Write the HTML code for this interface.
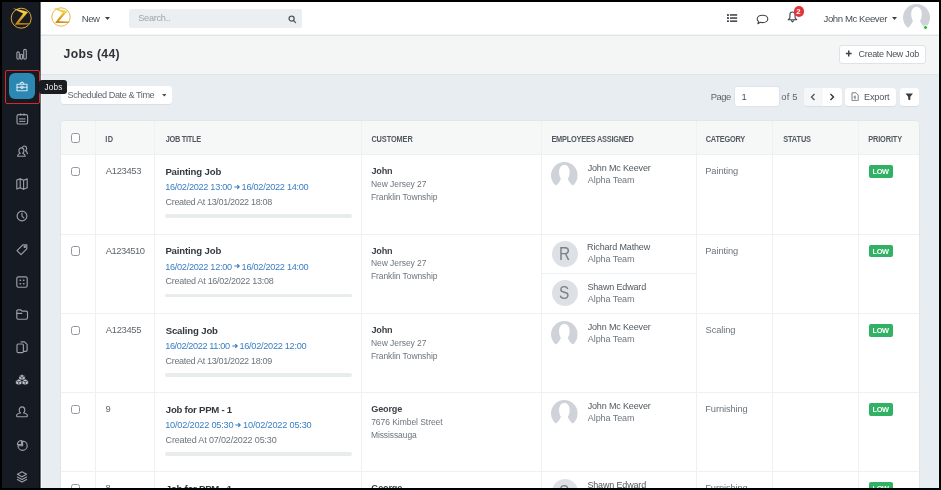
<!DOCTYPE html>
<html><head><meta charset="utf-8"><style>
*{box-sizing:border-box;margin:0;padding:0}
html,body{width:941px;height:490px;overflow:hidden;background:#000}
body{font-family:"Liberation Sans",sans-serif;position:relative}
.a{position:absolute;white-space:nowrap;line-height:1}
</style></head><body>
<div style="position:absolute;left:0;top:0;width:941px;height:490px;will-change:transform">
<div class="a" style="left:0px;top:0px;width:941px;height:490px;background:#000"></div>
<div class="a" style="left:2px;top:2px;width:937px;height:486px;background:#e8edf1"></div>
<div class="a" style="left:2px;top:2px;width:38px;height:486px;background:#161a23"></div>
<div class="a" style="left:39px;top:2px;width:1px;height:486px;background:#0c0f17"></div>
<div class="a" style="left:40px;top:2px;width:1px;height:486px;background:#6a6e74"></div>
<div class="a" style="left:41px;top:75px;width:1px;height:413px;background:#f4f8fb"></div>
<div class="a" style="left:41px;top:2px;width:898px;height:32px;background:#fff"></div>
<div class="a" style="left:41px;top:34px;width:898px;height:1px;background:#f1f2f3"></div>
<div class="a" style="left:41px;top:35px;width:898px;height:1px;background:#e2e5e7"></div>
<div class="a" style="left:41px;top:36px;width:898px;height:39px;background:#f4f6f6"></div>
<div class="a" style="left:41px;top:74px;width:898px;height:1px;background:#e1e5e8"></div>
<svg class="a" style="left:5.782608695652172px;top:2.8826086956521735px;" width="30.43" height="30.43" viewBox="0 0 30.43 30.43"><defs><linearGradient id="g21" x1="0" y1="0" x2="0.3" y2="1"><stop offset="0" stop-color="#f0c24a"/><stop offset=".45" stop-color="#f2cf3c"/><stop offset=".75" stop-color="#d99a18"/><stop offset="1" stop-color="#c27f0c"/></linearGradient></defs><g transform="scale(1.0869565217391306)"><circle cx="14" cy="14" r="9.2" fill="none" stroke="#e3ad36" stroke-width="0.9"/><path d="M6.3 4.9C10 5.6 15.5 6.8 20.3 8.2L11.8 18.3 23.2 18.7 20.5 19.8 8 20 15.8 9.6C12.5 8.2 9.5 6.5 6.3 4.9Z" fill="url(#g21)"/></g></svg>
<svg class="a" style="left:14.3px;top:46.5px;" width="14" height="14" viewBox="0 0 14 14"><g fill="none" stroke="#9a9fa7" stroke-width="1.15" stroke-linecap="round" stroke-linejoin="round"><rect x="2.9" y="4.9" width="2.4" height="7.2" rx="1.2"/><rect x="6.3" y="7.2" width="2.3" height="4.9" rx="1.1"/><rect x="9.7" y="2.4" width="2.6" height="9.7" rx="1.2"/></g></svg>
<div class="a" style="left:4.5px;top:69.5px;width:35px;height:34px;border:1.4px solid #d8282a;border-radius:2px"></div>
<div class="a" style="left:9px;top:73px;width:26px;height:26px;background:#2c87b3;border-radius:6px"></div>
<svg class="a" style="left:14.5px;top:79.0px;" width="14" height="14" viewBox="0 0 14 14"><g fill="none" stroke="#d3e6f0" stroke-width="1.1" stroke-linecap="round" stroke-linejoin="round"><path d="M2 5.2h10v6.6H2z" rx="1"/><path d="M2 8.2h10"/><path d="M5 5.2 6 3.4h2l1 1.8"/><circle cx="7" cy="8.2" r="1.2"/></g></svg>
<svg class="a" style="left:14.5px;top:112.0px;" width="14" height="14" viewBox="0 0 14 14"><g fill="none" stroke="#9a9fa7" stroke-width="1.15" stroke-linecap="round" stroke-linejoin="round"><rect x="2" y="2.6" width="10.6" height="9.4" rx="1.6"/><path d="M5.6 1.9v1.2M9 1.9v1.2"/><g stroke-width="1.3"><path d="M4.7 6.9h.9M6.8 6.9h.9M8.9 6.9h.9M4.7 9.3h.9M6.8 9.3h.9M8.9 9.3h.9"/></g></g></svg>
<svg class="a" style="left:14.5px;top:144.0px;" width="14" height="14" viewBox="0 0 14 14"><g fill="none" stroke="#9a9fa7" stroke-width="1.15" stroke-linecap="round" stroke-linejoin="round"><path d="M2.6 12.2c0-1.6 1.3-2.4 2.5-2.9-.8-.6-1.2-1.5-1.2-2.6 0-1.6 1.1-2.8 2.5-2.8s2.5 1.2 2.5 2.8c0 1.1-.4 2-1.2 2.6 1.2.5 2.5 1.3 2.5 2.9z"/><path d="M7.4 3.2c.4-.8 1.1-1.2 1.9-1.2 1.3 0 2.3 1 2.3 2.5 0 1-.4 1.8-1.1 2.3.9.5 1.7 1.3 1.9 2.8"/></g></svg>
<svg class="a" style="left:14.5px;top:177.0px;" width="14" height="14" viewBox="0 0 14 14"><g fill="none" stroke="#9a9fa7" stroke-width="1.15" stroke-linecap="round" stroke-linejoin="round"><path d="M1.8 3v9l3.4-1.2 3.4 1.4 3.6-1.4V1.9L8.6 3.3 5.2 1.9z"/><path d="M5.2 1.9v8.9M8.6 3.3v8.9"/></g></svg>
<svg class="a" style="left:14.5px;top:209.3px;" width="14" height="14" viewBox="0 0 14 14"><g fill="none" stroke="#9a9fa7" stroke-width="1.15" stroke-linecap="round" stroke-linejoin="round"><circle cx="7" cy="7" r="4.9"/><path d="M7 4.1v3l1.8 1.8"/></g></svg>
<svg class="a" style="left:14.5px;top:241.5px;" width="14" height="14" viewBox="0 0 14 14"><g fill="none" stroke="#9a9fa7" stroke-width="1.15" stroke-linecap="round" stroke-linejoin="round"><path d="M2 8.6 7.8 2.8h4v4L6 12.6z"/><circle cx="9.8" cy="4.8" r=".7" fill="#9a9fa7"/></g></svg>
<svg class="a" style="left:14.5px;top:275.0px;" width="14" height="14" viewBox="0 0 14 14"><g fill="none" stroke="#9a9fa7" stroke-width="1.15" stroke-linecap="round" stroke-linejoin="round"><rect x="1.8" y="1.8" width="10.4" height="10.4" rx="1.6"/><g stroke-width="1.5"><path d="M5.1 5.2h.4M8.5 5.2h.4M5.1 8.7h.4M8.5 8.7h.4"/></g></g></svg>
<svg class="a" style="left:14.5px;top:307.0px;" width="14" height="14" viewBox="0 0 14 14"><g fill="none" stroke="#9a9fa7" stroke-width="1.15" stroke-linecap="round" stroke-linejoin="round"><path d="M1.8 4.2c0-.8.5-1.4 1.3-1.4h2.7l1.2 1.3h4.2c.8 0 1.3.6 1.3 1.4v5.3c0 .8-.5 1.4-1.3 1.4H3.1c-.8 0-1.3-.6-1.3-1.4z"/><path d="M1.8 6.4h5"/></g></svg>
<svg class="a" style="left:14.5px;top:340.0px;" width="14" height="14" viewBox="0 0 14 14"><g fill="none" stroke="#9a9fa7" stroke-width="1.15" stroke-linecap="round" stroke-linejoin="round"><rect x="2" y="4" width="6.4" height="8.6" rx="1.2"/><path d="M6 1.8h3.5l2.6 2.6v5.8c0 .7-.5 1.2-1.2 1.2H8.4"/></g></svg>
<svg class="a" style="left:14.5px;top:373.5px;" width="14" height="12" viewBox="0 0 14 12"><g fill="#c3c7cf" stroke="#161a23" stroke-width=".6" stroke-linejoin="round"><path d="M7 .6l3.1 1.4v3.4L7 6.8 3.9 5.4V2z"/><path d="M3.8 5l3.1 1.4v3.4l-3.1 1.4L.7 9.8V6.4z"/><path d="M10.2 5l3.1 1.4v3.4l-3.1 1.4-3.1-1.4V6.4z"/></g><g fill="none" stroke="#161a23" stroke-width=".7"><path d="M3.9 2 7 3.4 10.1 2M7 3.4v3.4M.7 6.4l3.1 1.4 3.1-1.4M3.8 7.8v3.4M7.1 6.4l3.1 1.4 3.1-1.4M10.2 7.8v3.4"/></g></svg>
<svg class="a" style="left:14.5px;top:405.0px;" width="14" height="14" viewBox="0 0 14 14"><g fill="none" stroke="#9a9fa7" stroke-width="1.15" stroke-linecap="round" stroke-linejoin="round"><path d="M7 1.9c1.7 0 2.8 1.3 2.8 3.1 0 1.3-.6 2.4-1.3 3 2.3.4 3.9 1.5 3.9 2.7 0 .6-.4 1-1 1H2.6c-.6 0-1-.4-1-1 0-1.2 1.6-2.3 3.9-2.7-.7-.6-1.3-1.7-1.3-3 0-1.8 1.1-3.1 2.8-3.1z"/></g></svg>
<svg class="a" style="left:15.0px;top:438.0px;" width="14" height="14" viewBox="0 0 14 14"><g fill="none" stroke="#9a9fa7" stroke-width="1.15" stroke-linecap="round" stroke-linejoin="round"><path d="M7.6 3.1V7.7H3A4.6 4.6 0 1 0 7.6 3.1z"/><path d="M6.5 6.6H2.4A4.1 4.1 0 0 1 6.5 2.5z"/></g></svg>
<svg class="a" style="left:14.5px;top:469.8px;" width="14" height="14" viewBox="0 0 14 14"><g fill="none" stroke="#9a9fa7" stroke-width="1.15" stroke-linecap="round" stroke-linejoin="round"><path d="M7 1.8l4.6 2.5L7 6.8 2.4 4.3z"/><path d="M2.4 7l4.6 2.5L11.6 7"/><path d="M2.4 9.6 7 12.1l4.6-2.5"/></g></svg>
<svg class="a" style="left:47.1px;top:3.3999999999999986px;" width="28.0" height="28.0" viewBox="0 0 28.0 28.0"><defs><linearGradient id="g61" x1="0" y1="0" x2="0.3" y2="1"><stop offset="0" stop-color="#f0c24a"/><stop offset=".45" stop-color="#f2cf3c"/><stop offset=".75" stop-color="#d99a18"/><stop offset="1" stop-color="#c27f0c"/></linearGradient></defs><g transform="scale(1.0)"><circle cx="14" cy="14" r="9.2" fill="none" stroke="#e3ad36" stroke-width="0.9"/><path d="M6.3 4.9C10 5.6 15.5 6.8 20.3 8.2L11.8 18.3 23.2 18.7 20.5 19.8 8 20 15.8 9.6C12.5 8.2 9.5 6.5 6.3 4.9Z" fill="url(#g61)"/></g></svg>
<div class="a" style="left:81.73px;top:13.67px;font-size:9.6px;color:#4a5057;letter-spacing:-0.490px;">New</div>
<svg class="a" style="left:104.5px;top:16.5px;" width="5" height="3" viewBox="0 0 5 3"><path d="M0 0h5L2.5 3z" fill="#3b4047"/></svg>
<div class="a" style="left:129px;top:9px;width:173px;height:19px;background:#eceff1;border-radius:2px"></div>
<div class="a" style="left:138.29px;top:14.11px;font-size:9.2px;color:#9ea5ac;letter-spacing:-0.290px;">Search..</div>
<svg class="a" style="left:287.5px;top:14.5px;" width="9" height="9" viewBox="0 0 9 9"><g fill="none" stroke="#50565c" stroke-width="1.3"><circle cx="3.6" cy="3.6" r="2.55"/><path d="M5.6 5.6 7.6 7.6" stroke-linecap="round"/></g></svg>
<svg class="a" style="left:727px;top:13.8px;" width="11" height="8.5" viewBox="0 0 11 8.5"><g fill="#3a3f45"><rect x="0" y="0" width="1.9" height="1.9" rx=".4"/><rect x="0" y="3.1" width="1.9" height="1.9" rx=".4"/><rect x="0" y="6.2" width="1.9" height="1.9" rx=".4"/><rect x="3" y=".2" width="7.2" height="1.5"/><rect x="3" y="3.3" width="7.2" height="1.5"/><rect x="3" y="6.4" width="7.2" height="1.5"/></g></svg>
<svg class="a" style="left:755.5px;top:13.5px;" width="13" height="11" viewBox="0 0 13 11"><path d="M6.5 1.2c3 0 5.3 1.6 5.3 3.7s-2.3 3.7-5.3 3.7c-.7 0-1.4-.1-2-.3L1.8 9.7l.9-2.1C1.7 6.9 1.2 6 1.2 4.9c0-2.1 2.3-3.7 5.3-3.7z" fill="none" stroke="#3f444a" stroke-width="1.1" stroke-linejoin="round"/></svg>
<svg class="a" style="left:786.5px;top:11px;" width="11" height="12.5" viewBox="0 0 11 12.5"><g fill="none" stroke="#3f444a" stroke-width="1.1" stroke-linejoin="round"><path d="M5.5 1C3.9 1 2.9 2.3 2.9 3.9v3L1.2 8.8h8.6L8.1 6.9v-3C8.1 2.3 7.1 1 5.5 1z"/><path d="M4 9.4l1.5 1.5L7 9.4"/></g></svg>
<div class="a" style="left:793.5px;top:6.2px;width:10.6px;height:10.6px;background:#e3343a;border-radius:50%"></div>
<div class="a" style="left:796.13px;top:7.70px;font-size:7.8px;font-weight:700;color:#fff;letter-spacing:0.000px;">2</div>
<div class="a" style="left:823.56px;top:13.97px;font-size:9.6px;color:#4a5057;letter-spacing:-0.425px;">John Mc Keever</div>
<svg class="a" style="left:891.8px;top:17px;" width="5" height="3" viewBox="0 0 5 3"><path d="M0 0h5L2.5 3z" fill="#3b4047"/></svg>
<svg class="a" style="left:902.5px;top:4px;" width="27" height="27" viewBox="0 0 27 27"><defs><clipPath id="c9024"><rect x="0" y="0" width="27" height="23.76"/></clipPath></defs><circle cx="13.5" cy="13.5" r="13.5" fill="#cfd3d9" clip-path="url(#c9024)"/><path transform="scale(1.0384615384615385)" d="M4.5 23.5C7 21 9 18.5 9.6 16.2 8.2 14.2 7.6 11.2 8 8 8.5 4.6 10.5 2.6 13 2.6s4.5 2 5 5.4c.4 3.2-.2 6.2-1.6 8.2.6 2.3 2.6 4.8 5.1 7.3V27H4.5z" fill="#fff"/></svg>
<div class="a" style="left:922.6px;top:24.6px;width:5.4px;height:5.4px;background:#2dbb3c;border-radius:50%;border:1px solid #fff"></div>
<div class="a" style="left:63.62px;top:48.07px;font-size:12.2px;font-weight:700;color:#2d3338;letter-spacing:0.304px;">Jobs (44)</div>
<div class="a" style="left:839px;top:44.5px;width:86.5px;height:19px;background:#fff;border:1px solid #dfe3e7;border-radius:3px"></div>
<svg class="a" style="left:844.9px;top:49.8px;" width="7.5" height="7" viewBox="0 0 7.5 7"><path d="M3.75 .6v5.8M.85 3.5h5.8" stroke="#3b4249" stroke-width="1.5"/></svg>
<div class="a" style="left:858.55px;top:49.78px;font-size:9.0px;color:#4a525a;letter-spacing:-0.302px;">Create New Job</div>
<div class="a" style="left:61px;top:86px;width:111px;height:18px;background:#fff;border-radius:3px;box-shadow:0 .5px 1px rgba(0,0,0,.06)"></div>
<div class="a" style="left:67.59px;top:90.80px;font-size:9.1px;color:#5d6873;letter-spacing:-0.426px;">Scheduled Date &amp; Time</div>
<svg class="a" style="left:161.8px;top:94.1px;" width="4.6" height="2.6" viewBox="0 0 4.6 2.6"><path d="M0 0h4.6L2.3 2.6z" fill="#4a525a"/></svg>
<div class="a" style="left:710.85px;top:91.94px;font-size:9.4px;color:#5c656c;letter-spacing:-0.474px;">Page</div>
<div class="a" style="left:733.8px;top:85.6px;width:45.8px;height:21.6px;background:#fff;border:1px solid #dfe3e7;border-radius:3px"></div>
<div class="a" style="left:741.50px;top:91.94px;font-size:9.4px;color:#4a525a;letter-spacing:0.000px;">1</div>
<div class="a" style="left:781.32px;top:91.94px;font-size:9.4px;color:#5c656c;letter-spacing:0.200px;">of 5</div>
<div class="a" style="left:803.7px;top:87.7px;width:38px;height:18.3px;background:#fff;border-radius:3px;box-shadow:0 .5px 1px rgba(0,0,0,.07)"></div>
<div class="a" style="left:803.7px;top:87.7px;width:19px;height:18.3px;background:#f5f7f8;border-radius:3px 0 0 3px"></div>
<svg class="a" style="left:810px;top:93px;" width="6" height="8" viewBox="0 0 6 8"><path d="M4.5 1 1.5 4l3 3" fill="none" stroke="#555c63" stroke-width="1.4"/></svg>
<svg class="a" style="left:829px;top:93px;" width="6" height="8" viewBox="0 0 6 8"><path d="M1.5 1l3 3-3 3" fill="none" stroke="#2f353b" stroke-width="1.4"/></svg>
<div class="a" style="left:845.4px;top:87.7px;width:50.6px;height:18.3px;background:#fff;border-radius:3px;box-shadow:0 .5px 1px rgba(0,0,0,.07)"></div>
<svg class="a" style="left:851px;top:91.5px;" width="8" height="9.5" viewBox="0 0 8 9.5"><g fill="none" stroke="#6a727a" stroke-width=".9"><path d="M1 .8h4l2.2 2.2v5.7H1z"/><path d="M3 4.5l1.2 1.3M4.2 4.5 3 5.8M4 3.5v4"/></g></svg>
<div class="a" style="left:863.96px;top:92.71px;font-size:9.2px;color:#4f5760;letter-spacing:-0.192px;">Export</div>
<div class="a" style="left:899.8px;top:87.7px;width:19px;height:18.3px;background:#fff;border-radius:3px;box-shadow:0 .5px 1px rgba(0,0,0,.07)"></div>
<svg class="a" style="left:905px;top:93px;" width="8.5" height="8" viewBox="0 0 8.5 8"><path d="M.5.5h7.5L5.3 3.8v3.4L3.2 6.4V3.8z" fill="#363c42"/></svg>
<div class="a" style="left:60px;top:120px;width:860px;height:400px;background:#fff;border:1px solid #e2e6e9;border-radius:5px 5px 0 0"></div>
<div class="a" style="left:61px;top:121px;width:858px;height:33px;background:#f6f8f8;border-radius:4px 4px 0 0"></div>
<div class="a" style="left:95px;top:121px;width:1px;height:400px;background:#edf1f2"></div>
<div class="a" style="left:154px;top:121px;width:1px;height:400px;background:#edf1f2"></div>
<div class="a" style="left:361px;top:121px;width:1px;height:400px;background:#edf1f2"></div>
<div class="a" style="left:541px;top:121px;width:1px;height:400px;background:#edf1f2"></div>
<div class="a" style="left:696px;top:121px;width:1px;height:400px;background:#edf1f2"></div>
<div class="a" style="left:772px;top:121px;width:1px;height:400px;background:#edf1f2"></div>
<div class="a" style="left:858px;top:121px;width:1px;height:400px;background:#edf1f2"></div>
<div class="a" style="left:61px;top:154px;width:858px;height:1px;background:#edf1f2"></div>
<div class="a" style="left:61px;top:234px;width:858px;height:1px;background:#edf1f2"></div>
<div class="a" style="left:61px;top:313px;width:858px;height:1px;background:#edf1f2"></div>
<div class="a" style="left:61px;top:392px;width:858px;height:1px;background:#edf1f2"></div>
<div class="a" style="left:61px;top:471px;width:858px;height:1px;background:#edf1f2"></div>
<div class="a" style="left:541px;top:273px;width:155px;height:1px;background:#edf1f2"></div>
<div class="a" style="left:70.6px;top:133.3px;width:9.7px;height:9.6px;border:1.1px solid #92969b;border-radius:2.5px;background:#fff"></div>
<div class="a" style="left:105.22px;top:135.94px;font-size:7.4px;font-weight:700;color:#535b62;letter-spacing:0.477px;transform:scaleY(1.1);transform-origin:0 6.26px">ID</div>
<div class="a" style="left:165.79px;top:135.94px;font-size:7.4px;font-weight:700;color:#535b62;letter-spacing:-0.306px;transform:scaleY(1.1);transform-origin:0 6.26px">JOB TITLE</div>
<div class="a" style="left:371.40px;top:135.94px;font-size:7.4px;font-weight:700;color:#535b62;letter-spacing:-0.119px;transform:scaleY(1.1);transform-origin:0 6.26px">CUSTOMER</div>
<div class="a" style="left:551.42px;top:136.04px;font-size:7.4px;font-weight:700;color:#535b62;letter-spacing:-0.229px;transform:scaleY(1.1);transform-origin:0 6.26px">EMPLOYEES ASSIGNED</div>
<div class="a" style="left:705.70px;top:135.94px;font-size:7.4px;font-weight:700;color:#535b62;letter-spacing:-0.214px;transform:scaleY(1.1);transform-origin:0 6.26px">CATEGORY</div>
<div class="a" style="left:783.18px;top:135.94px;font-size:7.4px;font-weight:700;color:#535b62;letter-spacing:-0.122px;transform:scaleY(1.1);transform-origin:0 6.26px">STATUS</div>
<div class="a" style="left:868.22px;top:135.94px;font-size:7.4px;font-weight:700;color:#535b62;letter-spacing:-0.148px;transform:scaleY(1.1);transform-origin:0 6.26px">PRIORITY</div>
<div class="a" style="left:70.6px;top:166.9px;width:9.7px;height:9.6px;border:1.1px solid #92969b;border-radius:2.5px;background:#fff"></div>
<div class="a" style="left:105.80px;top:166.14px;font-size:9.4px;color:#5f676e;letter-spacing:-0.312px;">A123453</div>
<div class="a" style="left:165.38px;top:166.67px;font-size:9.6px;font-weight:700;color:#33393f;letter-spacing:-0.154px;">Painting Job</div>
<div class="a" style="left:165.21px;top:183.01px;font-size:9.2px;color:#3a7ec3;letter-spacing:-0.307px;">16/02/2022 13:00</div>
<svg class="a" style="left:233.8px;top:183.5px;" width="6.2" height="6" viewBox="0 0 6.2 6"><path d="M.3 3h5M3.3 1.1 5.2 3 3.3 4.9" fill="none" stroke="#3a7ec3" stroke-width="1.15"/></svg>
<div class="a" style="left:241.61px;top:183.01px;font-size:9.2px;color:#3a7ec3;letter-spacing:-0.294px;">16/02/2022 14:00</div>
<div class="a" style="left:165.55px;top:197.98px;font-size:9.0px;color:#6c747b;letter-spacing:-0.325px;">Created At 13/01/2022 18:08</div>
<div class="a" style="left:165.3px;top:214.3px;width:186.5px;height:3.6px;background:#e8eced;border-radius:2px"></div>
<div class="a" style="left:371.46px;top:167.00px;font-size:9.1px;font-weight:700;color:#3d4349;letter-spacing:-0.189px;">John</div>
<div class="a" style="left:370.92px;top:179.90px;font-size:8.5px;color:#6d757c;letter-spacing:-0.052px;">New Jersey 27</div>
<div class="a" style="left:370.92px;top:192.50px;font-size:8.5px;color:#6d757c;letter-spacing:-0.085px;">Franklin Township</div>
<svg class="a" style="left:551.4px;top:161.5px;" width="26.7" height="26.7" viewBox="0 0 26.7 26.7"><defs><clipPath id="c551161"><rect x="0" y="0" width="26.7" height="23.496"/></clipPath></defs><circle cx="13.35" cy="13.35" r="13.35" fill="#cfd3d9" clip-path="url(#c551161)"/><path transform="scale(1.0269230769230768)" d="M4.5 23.5C7 21 9 18.5 9.6 16.2 8.2 14.2 7.6 11.2 8 8 8.5 4.6 10.5 2.6 13 2.6s4.5 2 5 5.4c.4 3.2-.2 6.2-1.6 8.2.6 2.3 2.6 4.8 5.1 7.3V27H4.5z" fill="#fff"/></svg>
<div class="a" style="left:587.66px;top:163.98px;font-size:9.0px;color:#50585f;letter-spacing:-0.146px;">John Mc Keever</div>
<div class="a" style="left:587.80px;top:175.88px;font-size:9.0px;color:#6f777e;letter-spacing:-0.067px;">Alpha Team</div>
<div class="a" style="left:705.26px;top:167.03px;font-size:9.3px;color:#6c747b;letter-spacing:-0.103px;">Painting</div>
<div class="a" style="left:868.7px;top:165.1px;width:24px;height:12.6px;background:#30b163;border-radius:2px"></div>
<div class="a" style="left:872.52px;top:168.44px;font-size:7.4px;font-weight:700;color:#fff;letter-spacing:-0.399px;">LOW</div>
<div class="a" style="left:70.6px;top:246.4px;width:9.7px;height:9.6px;border:1.1px solid #92969b;border-radius:2.5px;background:#fff"></div>
<div class="a" style="left:105.80px;top:245.64px;font-size:9.4px;color:#5f676e;letter-spacing:-0.519px;">A1234510</div>
<div class="a" style="left:165.38px;top:246.17px;font-size:9.6px;font-weight:700;color:#33393f;letter-spacing:-0.154px;">Painting Job</div>
<div class="a" style="left:165.21px;top:262.51px;font-size:9.2px;color:#3a7ec3;letter-spacing:-0.307px;">16/02/2022 12:00</div>
<svg class="a" style="left:233.8px;top:263.0px;" width="6.2" height="6" viewBox="0 0 6.2 6"><path d="M.3 3h5M3.3 1.1 5.2 3 3.3 4.9" fill="none" stroke="#3a7ec3" stroke-width="1.15"/></svg>
<div class="a" style="left:241.61px;top:262.51px;font-size:9.2px;color:#3a7ec3;letter-spacing:-0.294px;">16/02/2022 14:00</div>
<div class="a" style="left:165.55px;top:277.48px;font-size:9.0px;color:#6c747b;letter-spacing:-0.267px;">Created At 16/02/2022 13:08</div>
<div class="a" style="left:165.3px;top:293.8px;width:186.5px;height:3.6px;background:#e8eced;border-radius:2px"></div>
<div class="a" style="left:371.46px;top:246.50px;font-size:9.1px;font-weight:700;color:#3d4349;letter-spacing:-0.189px;">John</div>
<div class="a" style="left:370.92px;top:259.40px;font-size:8.5px;color:#6d757c;letter-spacing:-0.052px;">New Jersey 27</div>
<div class="a" style="left:370.92px;top:272.00px;font-size:8.5px;color:#6d757c;letter-spacing:-0.085px;">Franklin Township</div>
<div class="a" style="left:551.8px;top:241.0px;width:26px;height:26px;background:#dde1e6;border-radius:50%"></div>
<div class="a" style="left:558.93px;top:245.02px;font-size:18.4px;color:#7b8187;letter-spacing:0.000px;transform:scaleX(.84);transform-origin:0 0">R</div>
<div class="a" style="left:587.08px;top:243.48px;font-size:9.0px;color:#50585f;letter-spacing:-0.145px;">Richard Mathew</div>
<div class="a" style="left:587.80px;top:255.38px;font-size:9.0px;color:#6f777e;letter-spacing:-0.067px;">Alpha Team</div>
<div class="a" style="left:551.8px;top:280.3px;width:26px;height:26px;background:#dde1e6;border-radius:50%"></div>
<div class="a" style="left:559.37px;top:284.32px;font-size:18.4px;color:#7b8187;letter-spacing:0.000px;transform:scaleX(.84);transform-origin:0 0">S</div>
<div class="a" style="left:587.39px;top:282.78px;font-size:9.0px;color:#50585f;letter-spacing:-0.159px;">Shawn Edward</div>
<div class="a" style="left:587.80px;top:294.68px;font-size:9.0px;color:#6f777e;letter-spacing:-0.067px;">Alpha Team</div>
<div class="a" style="left:705.26px;top:246.53px;font-size:9.3px;color:#6c747b;letter-spacing:-0.103px;">Painting</div>
<div class="a" style="left:868.7px;top:244.6px;width:24px;height:12.6px;background:#30b163;border-radius:2px"></div>
<div class="a" style="left:872.52px;top:247.94px;font-size:7.4px;font-weight:700;color:#fff;letter-spacing:-0.399px;">LOW</div>
<div class="a" style="left:70.6px;top:325.9px;width:9.7px;height:9.6px;border:1.1px solid #92969b;border-radius:2.5px;background:#fff"></div>
<div class="a" style="left:105.80px;top:325.14px;font-size:9.4px;color:#5f676e;letter-spacing:-0.312px;">A123455</div>
<div class="a" style="left:165.71px;top:325.67px;font-size:9.6px;font-weight:700;color:#33393f;letter-spacing:-0.159px;">Scaling Job</div>
<div class="a" style="left:165.21px;top:342.01px;font-size:9.2px;color:#3a7ec3;letter-spacing:-0.404px;">16/02/2022 11:00</div>
<svg class="a" style="left:231.65504885993485px;top:342.5px;" width="6.2" height="6" viewBox="0 0 6.2 6"><path d="M.3 3h5M3.3 1.1 5.2 3 3.3 4.9" fill="none" stroke="#3a7ec3" stroke-width="1.15"/></svg>
<div class="a" style="left:239.47px;top:342.01px;font-size:9.2px;color:#3a7ec3;letter-spacing:-0.294px;">16/02/2022 12:00</div>
<div class="a" style="left:165.55px;top:356.98px;font-size:9.0px;color:#6c747b;letter-spacing:-0.325px;">Created At 13/01/2022 18:09</div>
<div class="a" style="left:165.3px;top:373.3px;width:186.5px;height:3.6px;background:#e8eced;border-radius:2px"></div>
<div class="a" style="left:371.46px;top:326.00px;font-size:9.1px;font-weight:700;color:#3d4349;letter-spacing:-0.189px;">John</div>
<div class="a" style="left:370.92px;top:338.90px;font-size:8.5px;color:#6d757c;letter-spacing:-0.052px;">New Jersey 27</div>
<div class="a" style="left:370.92px;top:351.50px;font-size:8.5px;color:#6d757c;letter-spacing:-0.085px;">Franklin Township</div>
<svg class="a" style="left:551.4px;top:320.5px;" width="26.7" height="26.7" viewBox="0 0 26.7 26.7"><defs><clipPath id="c551320"><rect x="0" y="0" width="26.7" height="23.496"/></clipPath></defs><circle cx="13.35" cy="13.35" r="13.35" fill="#cfd3d9" clip-path="url(#c551320)"/><path transform="scale(1.0269230769230768)" d="M4.5 23.5C7 21 9 18.5 9.6 16.2 8.2 14.2 7.6 11.2 8 8 8.5 4.6 10.5 2.6 13 2.6s4.5 2 5 5.4c.4 3.2-.2 6.2-1.6 8.2.6 2.3 2.6 4.8 5.1 7.3V27H4.5z" fill="#fff"/></svg>
<div class="a" style="left:587.66px;top:322.98px;font-size:9.0px;color:#50585f;letter-spacing:-0.146px;">John Mc Keever</div>
<div class="a" style="left:587.80px;top:334.88px;font-size:9.0px;color:#6f777e;letter-spacing:-0.067px;">Alpha Team</div>
<div class="a" style="left:705.58px;top:326.03px;font-size:9.3px;color:#6c747b;letter-spacing:-0.109px;">Scaling</div>
<div class="a" style="left:868.7px;top:324.1px;width:24px;height:12.6px;background:#30b163;border-radius:2px"></div>
<div class="a" style="left:872.52px;top:327.44px;font-size:7.4px;font-weight:700;color:#fff;letter-spacing:-0.399px;">LOW</div>
<div class="a" style="left:70.6px;top:404.9px;width:9.7px;height:9.6px;border:1.1px solid #92969b;border-radius:2.5px;background:#fff"></div>
<div class="a" style="left:105.38px;top:404.14px;font-size:9.4px;color:#5f676e;letter-spacing:0.000px;">9</div>
<div class="a" style="left:165.86px;top:404.67px;font-size:9.6px;font-weight:700;color:#33393f;letter-spacing:-0.255px;">Job for PPM - 1</div>
<div class="a" style="left:165.21px;top:421.01px;font-size:9.2px;color:#3a7ec3;letter-spacing:-0.207px;">10/02/2022 05:30</div>
<svg class="a" style="left:235.3px;top:421.5px;" width="6.2" height="6" viewBox="0 0 6.2 6"><path d="M.3 3h5M3.3 1.1 5.2 3 3.3 4.9" fill="none" stroke="#3a7ec3" stroke-width="1.15"/></svg>
<div class="a" style="left:243.11px;top:421.01px;font-size:9.2px;color:#3a7ec3;letter-spacing:-0.194px;">10/02/2022 05:30</div>
<div class="a" style="left:165.55px;top:435.98px;font-size:9.0px;color:#6c747b;letter-spacing:-0.152px;">Created At 07/02/2022 05:30</div>
<div class="a" style="left:165.3px;top:452.3px;width:186.5px;height:3.6px;background:#e8eced;border-radius:2px"></div>
<div class="a" style="left:371.24px;top:405.00px;font-size:9.1px;font-weight:700;color:#3d4349;letter-spacing:-0.168px;">George</div>
<div class="a" style="left:371.18px;top:417.90px;font-size:8.5px;color:#6d757c;letter-spacing:-0.048px;">7676 Kimbel Street</div>
<div class="a" style="left:370.92px;top:430.50px;font-size:8.5px;color:#6d757c;letter-spacing:-0.093px;">Mississauga</div>
<svg class="a" style="left:551.4px;top:399.5px;" width="26.7" height="26.7" viewBox="0 0 26.7 26.7"><defs><clipPath id="c551399"><rect x="0" y="0" width="26.7" height="23.496"/></clipPath></defs><circle cx="13.35" cy="13.35" r="13.35" fill="#cfd3d9" clip-path="url(#c551399)"/><path transform="scale(1.0269230769230768)" d="M4.5 23.5C7 21 9 18.5 9.6 16.2 8.2 14.2 7.6 11.2 8 8 8.5 4.6 10.5 2.6 13 2.6s4.5 2 5 5.4c.4 3.2-.2 6.2-1.6 8.2.6 2.3 2.6 4.8 5.1 7.3V27H4.5z" fill="#fff"/></svg>
<div class="a" style="left:587.66px;top:401.98px;font-size:9.0px;color:#50585f;letter-spacing:-0.146px;">John Mc Keever</div>
<div class="a" style="left:587.80px;top:413.88px;font-size:9.0px;color:#6f777e;letter-spacing:-0.067px;">Alpha Team</div>
<div class="a" style="left:705.26px;top:405.03px;font-size:9.3px;color:#6c747b;letter-spacing:-0.104px;">Furnishing</div>
<div class="a" style="left:868.7px;top:403.1px;width:24px;height:12.6px;background:#30b163;border-radius:2px"></div>
<div class="a" style="left:872.52px;top:406.44px;font-size:7.4px;font-weight:700;color:#fff;letter-spacing:-0.399px;">LOW</div>
<div class="a" style="left:70.6px;top:483.9px;width:9.7px;height:9.6px;border:1.1px solid #92969b;border-radius:2.5px;background:#fff"></div>
<div class="a" style="left:105.42px;top:483.14px;font-size:9.4px;color:#5f676e;letter-spacing:0.000px;">8</div>
<div class="a" style="left:165.86px;top:483.67px;font-size:9.6px;font-weight:700;color:#33393f;letter-spacing:-0.255px;">Job for PPM - 1</div>
<div class="a" style="left:165.21px;top:500.01px;font-size:9.2px;color:#3a7ec3;letter-spacing:-0.207px;">10/02/2022 05:30</div>
<svg class="a" style="left:235.3px;top:500.5px;" width="6.2" height="6" viewBox="0 0 6.2 6"><path d="M.3 3h5M3.3 1.1 5.2 3 3.3 4.9" fill="none" stroke="#3a7ec3" stroke-width="1.15"/></svg>
<div class="a" style="left:243.11px;top:500.01px;font-size:9.2px;color:#3a7ec3;letter-spacing:-0.194px;">10/02/2022 05:30</div>
<div class="a" style="left:165.55px;top:514.98px;font-size:9.0px;color:#6c747b;letter-spacing:-0.152px;">Created At 07/02/2022 05:30</div>
<div class="a" style="left:165.3px;top:531.3px;width:186.5px;height:3.6px;background:#e8eced;border-radius:2px"></div>
<div class="a" style="left:371.24px;top:484.00px;font-size:9.1px;font-weight:700;color:#3d4349;letter-spacing:-0.168px;">George</div>
<div class="a" style="left:371.18px;top:496.90px;font-size:8.5px;color:#6d757c;letter-spacing:-0.048px;">7676 Kimbel Street</div>
<div class="a" style="left:370.92px;top:509.50px;font-size:8.5px;color:#6d757c;letter-spacing:-0.093px;">Mississauga</div>
<div class="a" style="left:551.8px;top:478.5px;width:26px;height:26px;background:#dde1e6;border-radius:50%"></div>
<div class="a" style="left:559.37px;top:482.52px;font-size:18.4px;color:#7b8187;letter-spacing:0.000px;transform:scaleX(.84);transform-origin:0 0">S</div>
<div class="a" style="left:587.39px;top:480.98px;font-size:9.0px;color:#50585f;letter-spacing:-0.159px;">Shawn Edward</div>
<div class="a" style="left:587.80px;top:492.88px;font-size:9.0px;color:#6f777e;letter-spacing:-0.067px;">Alpha Team</div>
<div class="a" style="left:705.26px;top:484.03px;font-size:9.3px;color:#6c747b;letter-spacing:-0.104px;">Furnishing</div>
<div class="a" style="left:868.7px;top:482.1px;width:24px;height:12.6px;background:#30b163;border-radius:2px"></div>
<div class="a" style="left:872.52px;top:485.44px;font-size:7.4px;font-weight:700;color:#fff;letter-spacing:-0.399px;">LOW</div>
<div class="a" style="left:39px;top:80px;width:28px;height:14px;background:#1b1c1f;border-radius:3px"></div>
<div class="a" style="left:44.38px;top:83.56px;font-size:8.2px;color:#eceff2;letter-spacing:0.203px;">Jobs</div>
<div class="a" style="left:0px;top:0px;width:941px;height:2px;background:#000"></div>
<div class="a" style="left:0px;top:488px;width:941px;height:2px;background:#000"></div>
<div class="a" style="left:0px;top:0px;width:2px;height:490px;background:#000"></div>
<div class="a" style="left:939px;top:0px;width:2px;height:490px;background:#000"></div>
</div></body></html>
